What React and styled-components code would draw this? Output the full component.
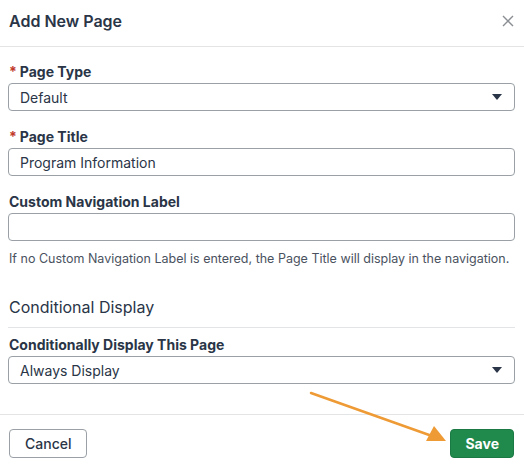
import React from 'react';
import styled, { createGlobalStyle } from 'styled-components';

const GlobalStyle = createGlobalStyle`
  body {
    margin: 0;
    background: #fff;
    font-family: Inter, "Liberation Sans", sans-serif;
    color: #2a3547;
  }
`;

const Modal = styled.div`
  position: relative;
  width: 524px;
  height: 467px;
  display: flex;
  flex-direction: column;
  background: #fff;
`;

const Header = styled.div`
  height: 47px;
  box-sizing: border-box;
  display: flex;
  align-items: center;
  justify-content: space-between;
  padding: 0 10px 4px 9px;
  border-bottom: 1px solid #e3e4e6;
`;

const Title = styled.h2`
  margin: 0;
  font-size: 16px;
  font-weight: 600;
  color: #2a3547;
`;

const CloseButton = styled.button`
  border: 0;
  background: none;
  padding: 0;
  display: flex;
  color: #8a8d92;
  cursor: pointer;
`;

const Body = styled.div`
  flex: 1;
  padding: 16px 9px 0 8px;
  border-bottom: 1px solid #e3e4e6;
`;

const Field = styled.div`
  margin-top: ${(p) => p.$top || 0}px;
  margin-bottom: ${(p) => p.$gap || 17}px;
`;

const Label = styled.label`
  display: block;
  font-size: 14px;
  line-height: 17px;
  font-weight: 700;
  margin: 0 0 3px 1px;
  color: #2a3547;
`;

const Required = styled.span`
  color: #c0392b;
  margin-right: 3px;
  font-weight: 700;
`;

const Box = styled.div`
  height: 28px;
  box-sizing: border-box;
  border: 1px solid #9aa0a6;
  border-radius: 4px;
  display: flex;
  align-items: center;
  justify-content: space-between;
  padding: 0 12px 0 11px;
  font-size: 14px;
  color: #2a3547;
`;

const Caret = styled.span`
  width: 0;
  height: 0;
  border-left: 5px solid transparent;
  border-right: 5px solid transparent;
  border-top: 6px solid #2a3547;
`;

const Help = styled.p`
  margin: 10px 0 0 1px;
  font-size: 12.5px;
  line-height: 15px;
  color: #4a5260;
`;

const SectionTitle = styled.h3`
  margin: 0;
  padding: 0 0 10px 1px;
  font-size: 16px;
  line-height: 19px;
  font-weight: 400;
  color: #2a3547;
  border-bottom: 1px solid #e3e4e6;
`;

const Footer = styled.div`
  height: 52px;
  box-sizing: border-box;
  display: flex;
  align-items: flex-start;
  justify-content: space-between;
  padding: 14px 10px 0 9px;
`;

const Button = styled.button`
  height: 29px;
  border-radius: 4px;
  font-family: inherit;
  font-size: 14px;
  padding: 0 ${(p) => (p.$primary ? 14 : 15)}px;
  border: 1px solid ${(p) => (p.$primary ? '#1b7a44' : '#9aa0a6')};
  background: ${(p) => (p.$primary ? '#1f8a4c' : '#fff')};
  color: ${(p) => (p.$primary ? '#fff' : '#2a3547')};
  font-weight: ${(p) => (p.$primary ? 700 : 500)};
`;

const Pointer = styled.svg`
  position: absolute;
  left: 0;
  top: 0;
  pointer-events: none;
`;

const Select = ({ value }) => (
  <Box>
    <span>{value}</span>
    <Caret />
  </Box>
);

export default function App() {
  return (
    <Modal>
      <GlobalStyle />
      <Header>
        <Title>Add New Page</Title>
        <CloseButton aria-label="Close">
          <svg width="12" height="12" viewBox="0 0 12 12">
            <path d="M1 1L11 11M11 1L1 11" stroke="currentColor" strokeWidth="1.4" />
          </svg>
        </CloseButton>
      </Header>
      <Body>
        <Field>
          <Label><Required>*</Required>Page Type</Label>
          <Select value="Default" />
        </Field>
        <Field>
          <Label><Required>*</Required>Page Title</Label>
          <Box>Program Information</Box>
        </Field>
        <Field $gap={32}>
          <Label>Custom Navigation Label</Label>
          <Box />
          <Help>If no Custom Navigation Label is entered, the Page Title will display in the navigation.</Help>
        </Field>
        <SectionTitle>Conditional Display</SectionTitle>
        <Field $top={8}>
          <Label>Conditionally Display This Page</Label>
          <Select value="Always Display" />
        </Field>
      </Body>
      <Footer>
        <Button>Cancel</Button>
        <Button $primary>Save</Button>
      </Footer>
      <Pointer width="524" height="467">
        <line x1="311" y1="393" x2="432" y2="436" stroke="#ee9a35" strokeWidth="2.5" strokeLinecap="round" />
        <polygon points="446,441 426,441 434,426" fill="#ee9a35" />
      </Pointer>
    </Modal>
  );
}
